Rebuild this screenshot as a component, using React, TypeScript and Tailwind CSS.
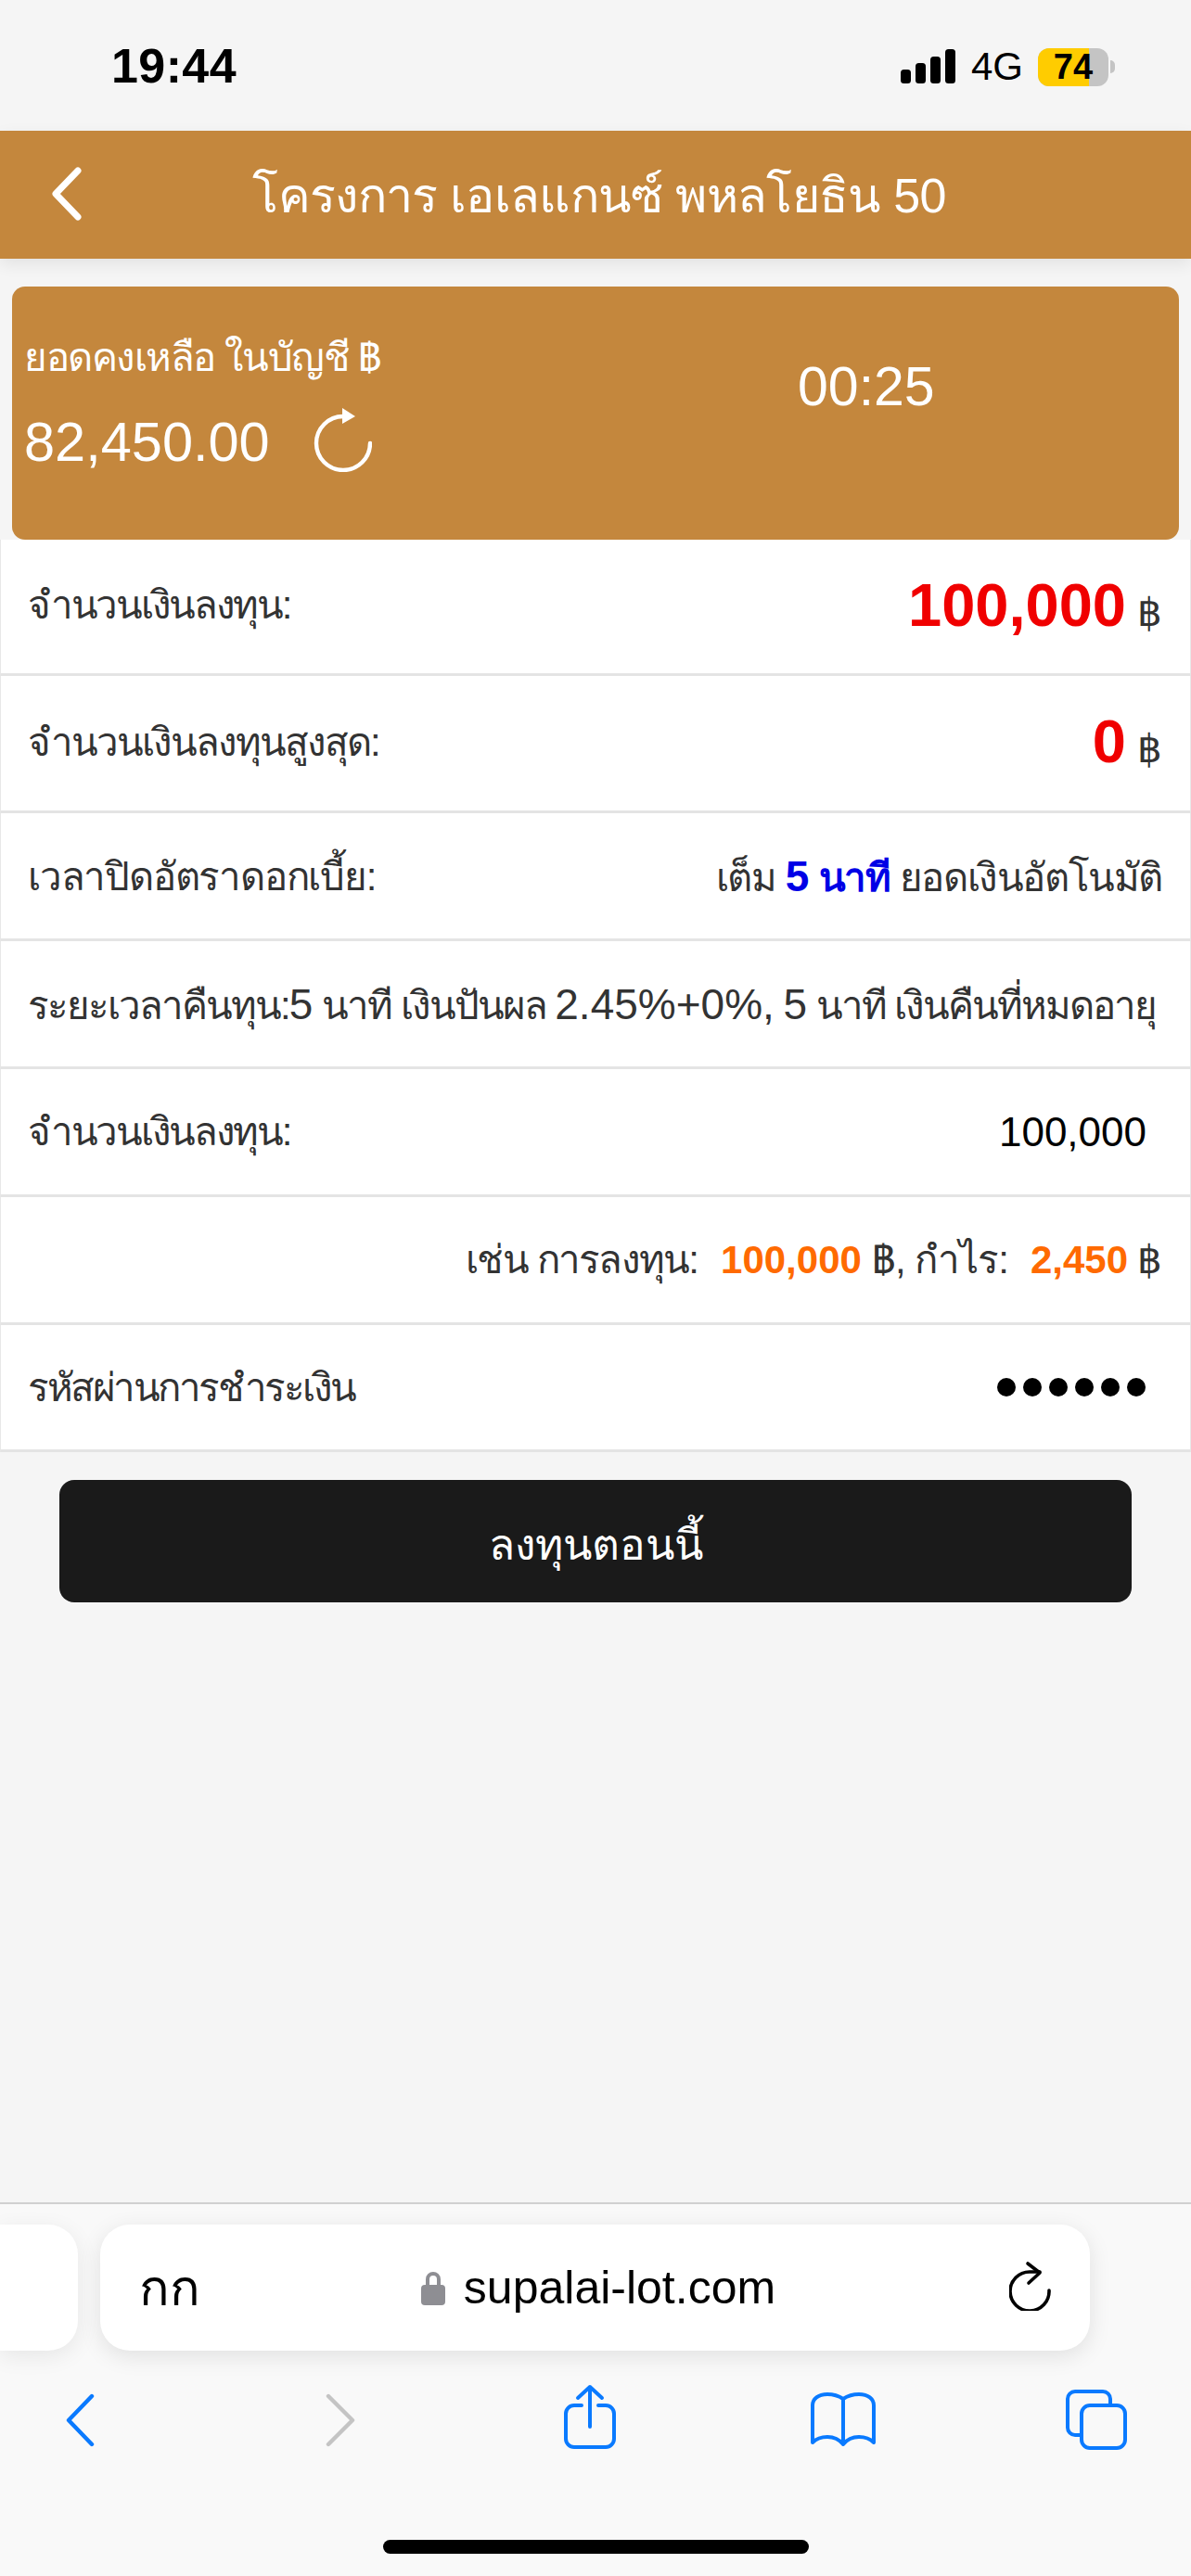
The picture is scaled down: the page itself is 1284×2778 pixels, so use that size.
import React from "react";

const font = "font-['Liberation_Sans','Noto_Sans',sans-serif]";

// Thai runs are squeezed with tracking on the row, latin bits get it back
const Num: React.FC<{ children: React.ReactNode }> = ({ children }) => (
  <span className="text-[46px] tracking-normal">{children}</span>
);

const Baht = () => <span className="text-[42px] tracking-normal text-[#333]">฿</span>;

const Row: React.FC<{ h: string; children: React.ReactNode }> = ({ h, children }) => (
  <div className={`${h} flex shrink-0 items-center justify-between whitespace-nowrap border-x border-b-[3px] border-x-[#e8e8e8] border-b-[#e4e4e4] bg-white pl-[29px] pr-[30px] text-[42px] tracking-[-2px] text-[#333]`}>
    {children}
  </div>
);

export default function App() {
  return (
    <div className={`${font} flex h-[2778px] w-[1284px] flex-col overflow-hidden bg-[#f5f5f5] text-black`}>
      {/* status bar */}
      <div className="flex h-[141px] shrink-0 items-start justify-between pl-[120px] pr-[82px] pt-[45px]">
        <span className="text-[52px] font-bold leading-[52px] tracking-[0.4px]">19:44</span>
        <div className="flex items-center pt-[5px]">
          <svg width="60" height="38" viewBox="0 0 60 38" fill="#000">
            <rect x="0" y="22" width="11" height="15" rx="3.5" />
            <rect x="16" y="15" width="11" height="22" rx="3.5" />
            <rect x="32" y="8" width="11" height="29" rx="3.5" />
            <rect x="48" y="0" width="11" height="37" rx="3.5" />
          </svg>
          <span className="ml-[16px] text-[42px] leading-[44px]">4G</span>
          <div className="relative ml-[16px] flex h-[41px] w-[76px] items-center justify-center overflow-hidden rounded-[12px] bg-[#c4c4c4]">
            <div className="absolute inset-y-0 left-0 w-[55px] bg-[#ffcc00]" />
            <span className="relative text-[38px] font-bold leading-none">74</span>
          </div>
          <div className="ml-[2px] h-[14px] w-[5px] rounded-r-full bg-[#c4c4c4]" />
        </div>
      </div>

      {/* header */}
      <div className="relative flex h-[138px] shrink-0 items-center justify-center bg-[#c4873d] pl-[8px] pt-[2px] text-[52px] tracking-[-0.7px] text-white shadow-[0_6px_16px_rgba(0,0,0,0.08)]">
        <svg width="40" height="60" viewBox="0 0 40 60" fill="none" stroke="#fff" strokeWidth="7" strokeLinecap="round" strokeLinejoin="round" className="absolute left-[52px] top-[38px]">
          <path d="M32 5 8 30l24 25" />
        </svg>
        <span className="whitespace-nowrap">โครงการ เอเลแกนซ์ พหลโยธิน 50</span>
      </div>

      {/* balance card */}
      <div className="mx-[13px] mt-[30px] flex h-[273px] shrink-0 items-start rounded-[14px] bg-[#c4873d] pl-[13px] pt-[47px] text-white">
        <div className="w-[680px]">
          <div className="whitespace-nowrap text-[42px] leading-[60px] tracking-[-1.5px]">ยอดคงเหลือ ในบัญชี ฿</div>
          <div className="mt-[23px] flex items-center">
            <span className="text-[59.5px] leading-[70px]">82,450.00</span>
            <svg width="64" height="70" viewBox="0 0 64 70" fill="none" className="mb-[6px] ml-[46px]">
              <path d="M62 39A29 29 0 1 1 33 10" stroke="#fff" strokeWidth="4.4" strokeLinecap="round" />
              <path d="M32 1 46 10 32 18z" fill="#fff" />
            </svg>
          </div>
        </div>
        <span className="ml-[154px] mt-[31px] text-[59px] leading-[60px]">00:25</span>
      </div>

      {/* rows */}
      <Row h="h-[147px] pb-[3px]">
        <span className="tracking-[-2.3px]">จำนวนเงินลงทุน:</span>
        <span className="flex items-baseline">
          <span className="text-[65px] font-bold tracking-normal text-[#f00000]">100,000</span>
          <span className="ml-[12px]"><Baht /></span>
        </span>
      </Row>
      <Row h="h-[148px] pb-[3px]">
        <span>จำนวนเงินลงทุนสูงสุด:</span>
        <span className="flex items-baseline">
          <span className="text-[65px] font-bold tracking-normal text-[#f00000]">0</span>
          <span className="ml-[12px]"><Baht /></span>
        </span>
      </Row>
      <Row h="h-[138px] pt-[2px]">
        <span className="tracking-[-1.2px]">เวลาปิดอัตราดอกเบี้ย:</span>
        <span className="tracking-[-1.4px]">
          เต็ม <b className="text-[#0000e6]"><Num>5</Num> นาที</b> ยอดเงินอัตโนมัติ
        </span>
      </Row>
      <Row h="h-[138px] pt-[2px]">
        <span>
          ระยะเวลาคืนทุน:<Num>5</Num> นาที เงินปันผล <Num>2.45%+0%,</Num> <Num>5</Num> นาที เงินคืนที่หมดอายุ
        </span>
      </Row>
      <Row h="h-[138px]">
        <span className="tracking-[-2.3px]">จำนวนเงินลงทุน:</span>
        <span className="pr-[17px] text-[44px] tracking-normal text-black">100,000</span>
      </Row>
      <Row h="h-[138px]">
        <span />
        <span className="flex items-baseline">
          <span className="tracking-[-1.8px]">เช่น การลงทุน:</span>
          <b className="ml-[25px] tracking-normal text-[#ff6a00]">100,000</b>
          <span className="ml-[11px] tracking-[-1px]">฿, กำไร:</span>
          <b className="ml-[24px] tracking-normal text-[#ff6a00]">2,450</b>
          <span className="ml-[10px] tracking-normal">฿</span>
        </span>
      </Row>
      <Row h="h-[137px]">
        <span className="tracking-[-2.5px]">รหัสผ่านการชำระเงิน</span>
        <div className="flex gap-[8px] pr-[18px]">
          {[0, 1, 2, 3, 4, 5].map((i) => (
            <span key={i} className="h-[20px] w-[20px] rounded-full bg-black" />
          ))}
        </div>
      </Row>

      {/* submit */}
      <button className="mx-[64px] mt-[30px] flex h-[132px] shrink-0 items-center justify-center rounded-[16px] bg-[#1a1a1a] pt-[9px] text-[46px] text-white">
        ลงทุนตอนนี้
      </button>

      <div className="flex-1" />

      {/* safari bars */}
      <div className="flex h-[403px] shrink-0 flex-col border-t-2 border-[#d0d0d0] bg-[#f9f9f9]">
        <div className="mt-[22px] flex h-[136px] shrink-0 gap-[24px]">
          <div className="h-full w-[84px] rounded-r-[32px] bg-white shadow-[0_6px_24px_rgba(0,0,0,0.08)]" />
          <div className="flex h-full w-[1067px] items-center rounded-[32px] bg-white pl-[42px] pr-[41px] shadow-[0_6px_24px_rgba(0,0,0,0.1)]">
            <span className="text-[54px] leading-none">กก</span>
            <div className="flex flex-1 items-center justify-center pr-[14px]">
              <svg width="26" height="38" viewBox="0 0 26 38" fill="#8e8e93">
                <path d="M5 18V10a8 8 0 0 1 16 0v8h-4V10a4 4 0 0 0-8 0v8z" />
                <rect x="0" y="16" width="26" height="22" rx="4" />
              </svg>
              <span className="ml-[20px] text-[50px] leading-none">supalai-lot.com</span>
            </div>
            <svg width="46" height="54" viewBox="0 0 46 54" fill="none" stroke="#000" strokeWidth="3.6" strokeLinecap="round" strokeLinejoin="round" className="mb-[4px]">
              <path d="M43 32A21 21 0 1 1 22 12H33" />
              <path d="M20 3 33 13 21 24" />
            </svg>
          </div>
        </div>
        <div className="mt-[36px] flex items-start">
          <svg width="40" height="58" viewBox="0 0 40 58" fill="none" stroke="#0a7aff" strokeWidth="4.4" strokeLinecap="round" strokeLinejoin="round" className="ml-[66px] mt-[10px]">
            <path d="M33 3 8 29l25 26" />
          </svg>
          <svg width="40" height="58" viewBox="0 0 40 58" fill="none" stroke="#c4c4c4" strokeWidth="4.4" strokeLinecap="round" strokeLinejoin="round" className="ml-[242px] mt-[10px]">
            <path d="M6 3 32 29 6 55" />
          </svg>
          <svg width="60" height="74" viewBox="0 0 60 74" fill="none" stroke="#0a7aff" strokeWidth="4" strokeLinecap="round" strokeLinejoin="round" className="ml-[218px]">
            <path d="M21 23H13a9 9 0 0 0-9 9v27a9 9 0 0 0 9 9h34a9 9 0 0 0 9-9V32a9 9 0 0 0-9-9h-8" />
            <path d="M30 46V3M17 15 30 3l13 12" />
          </svg>
          <svg width="74" height="62" viewBox="0 0 74 62" fill="none" stroke="#0a7aff" strokeWidth="4" strokeLinecap="round" strokeLinejoin="round" className="ml-[206px] mt-[8px]">
            <path d="M37 8C31 4 25 3 20 3 10 3 4 8 4 15v40c5-5 11-6 16-6 7 0 13 3 17 8 4-5 10-8 17-8 5 0 11 1 16 6V15c0-7-6-12-16-12-5 0-11 1-17 5v49" />
          </svg>
          <svg width="70" height="70" viewBox="0 0 70 70" fill="none" stroke="#0a7aff" strokeWidth="4" strokeLinecap="round" strokeLinejoin="round" className="ml-[201px] mt-[4px]">
            <path d="M19 51h-7a8 8 0 0 1-8-8V12a8 8 0 0 1 8-8h30a8 8 0 0 1 8 8v7" />
            <rect x="19" y="19" width="47" height="46" rx="9" />
          </svg>
        </div>
        <div className="mx-auto mt-[94px] h-[15px] w-[459px] rounded-full bg-black" />
      </div>
    </div>
  );
}
